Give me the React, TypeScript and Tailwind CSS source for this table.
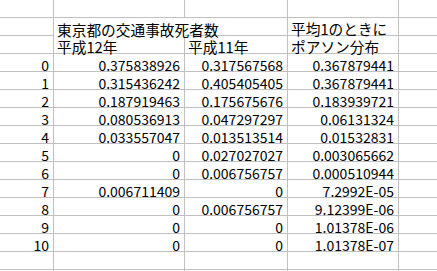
const widths = ["w-[54px]", "w-[131px]", "w-[103px]", "w-[111px]"];

type Cell = { text?: string; right?: boolean; noRight?: boolean; noBottom?: boolean; wide?: boolean };

const data: [string, string, string][] = [
  ["0.375838926", "0.317567568", "0.367879441"],
  ["0.315436242", "0.405405405", "0.367879441"],
  ["0.187919463", "0.175675676", "0.183939721"],
  ["0.080536913", "0.047297297", "0.06131324"],
  ["0.033557047", "0.013513514", "0.01532831"],
  ["0", "0.027027027", "0.003065662"],
  ["0", "0.006756757", "0.000510944"],
  ["0.006711409", "0", "7.2992E-05"],
  ["0", "0.006756757", "9.12399E-06"],
  ["0", "0", "1.01378E-06"],
  ["0", "0", "1.01378E-07"],
];

function Row({ cells }: { cells: Cell[] }) {
  return (
    <div className="flex h-[18px]">
      {cells.map((c, i) => (
        <div
          key={i}
          className={`flex h-[18px] shrink-0 items-end border-[#c0c0c0] whitespace-nowrap leading-[12px] ${widths[i] ?? "flex-1"} ${
            c.noBottom ? "" : "border-b"
          } ${c.noRight || i === 4 ? "" : "border-r"} ${
            c.right ? "justify-end pr-[4px] text-[14px]" : "pl-[3px] text-[14.7px]"
          } ${c.wide ? "relative z-10 overflow-visible" : ""}`}
        >
          {c.text && <span>{c.text}</span>}
        </div>
      ))}
    </div>
  );
}

export default function App() {
  const empty: Cell[] = [{}, {}, {}, {}, {}];
  return (
    <div className="w-[437px] h-[271px] overflow-hidden bg-white text-black font-['Noto_Sans_CJK_JP',sans-serif]">
      <Row cells={empty} />
      <Row
        cells={[
          {},
          { text: "東京都の交通事故死者数", noRight: true, noBottom: true, wide: true },
          {},
          { text: "平均1のときに" },
          {},
        ]}
      />
      <Row cells={[{}, { text: "平成12年" }, { text: "平成11年" }, { text: "ポアソン分布" }, {}]} />
      {data.map((r, i) => (
        <Row
          key={i}
          cells={[
            { text: String(i), right: true },
            { text: r[0], right: true },
            { text: r[1], right: true },
            { text: r[2], right: true },
            {},
          ]}
        />
      ))}
      <Row cells={empty} />
      <Row cells={empty} />
    </div>
  );
}
